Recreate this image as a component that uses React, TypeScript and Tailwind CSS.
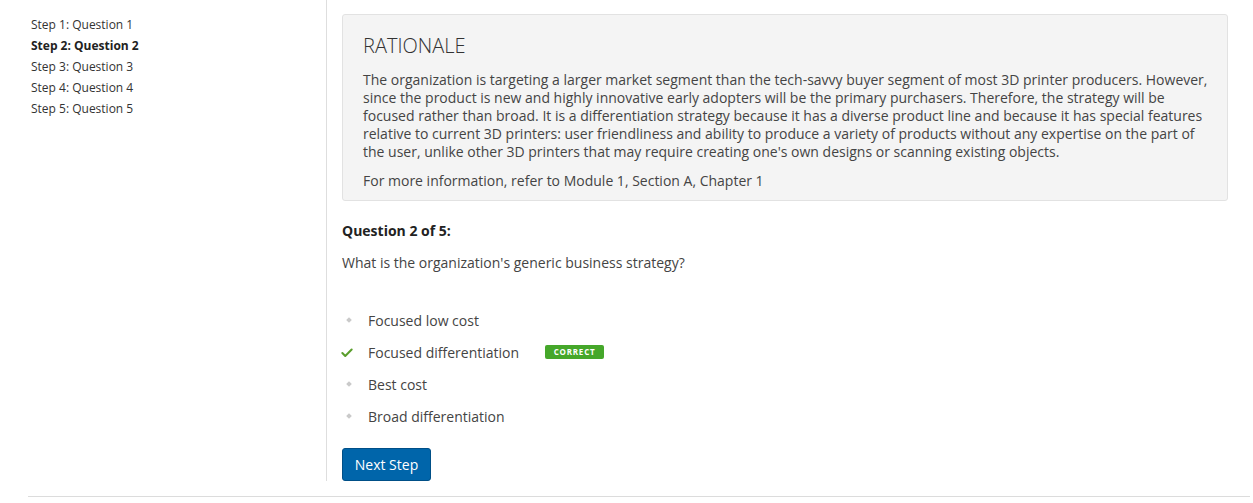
import { Check } from "lucide-react";

const steps = [
  "Step 1: Question 1",
  "Step 2: Question 2",
  "Step 3: Question 3",
  "Step 4: Question 4",
  "Step 5: Question 5",
];

const options = [
  { label: "Focused low cost", correct: false },
  { label: "Focused differentiation", correct: true },
  { label: "Best cost", correct: false },
  { label: "Broad differentiation", correct: false },
];

export default function App() {
  return (
    <div
      className="bg-white text-[#333] pl-[28px] pr-[3px]"
      style={{ fontFamily: '"Open Sans", "Liberation Sans", sans-serif' }}
    >
      <div className="flex pb-[15px] border-b border-[#dcdcdc]">
        {/* SIDEBAR */}
        <div className="w-[298px] shrink-0 pl-[3px] pt-[14px]">
          {steps.map((s, i) => (
            <div
              key={s}
              className={`text-[12px] leading-[21px] ${
                i === 1 ? "font-bold text-[#222]" : "text-[#333]"
              }`}
            >
              {s}
            </div>
          ))}
        </div>

        {/* MAIN */}
        <div className="flex-1 border-l border-[#dedede] pl-[15px] pr-[22px] pt-[14px]">
          <div className="bg-[#f4f4f4] border border-[#e2e2e2] rounded-[3px] pl-5 pr-[12px] pt-[17px] pb-[10px]">
            <h2 className="text-[20px] leading-[28px] font-light text-[#333]">
              RATIONALE
            </h2>
            <p className="mt-[11px] text-[14px] leading-[18px] text-[#444]">
              The organization is targeting a larger market segment than the
              tech-savvy buyer segment of most 3D printer producers. However,
              since the product is new and highly innovative early adopters will
              be the primary purchasers. Therefore, the strategy will be focused
              rather than broad. It is a differentiation strategy because it has
              a diverse product line and because it has special features
              relative to current 3D printers: user friendliness and ability to
              produce a variety of products without any expertise on the part of
              the user, unlike other 3D printers that may require creating one's
              own designs or scanning existing objects.
            </p>
            <p className="mt-[11px] text-[14px] leading-[18px] text-[#444]">
              For more information, refer to Module 1, Section A, Chapter 1
            </p>
          </div>

          <div className="mt-[20px] text-[14px] leading-[20px] font-bold text-[#222]">
            Question 2 of 5:
          </div>
          <div className="mt-[12px] text-[14px] leading-[20px] text-[#444]">
            What is the organization's generic business strategy?
          </div>

          <div className="mt-[31px]">
            {options.map((o) => (
              <div key={o.label} className="flex items-center h-[32px]">
                <div className="w-[26px] flex items-center">
                  {o.correct ? (
                    <Check
                      className="w-[14px] h-[14px] -ml-[2px] mt-[2px] text-[#5a9e2c]"
                      strokeWidth={3.5}
                    />
                  ) : (
                    <span className="block ml-[5px] w-[4px] h-[4px] bg-[#cacaca] rotate-45" />
                  )}
                </div>
                <span className="text-[14px] text-[#444]">{o.label}</span>
                {o.correct && (
                  <span className="ml-[26px] bg-[#45a72a] text-white text-[8px] font-bold tracking-[0.8px] rounded-[2px] w-[59px] h-[14px] flex items-center justify-center">
                    CORRECT
                  </span>
                )}
              </div>
            ))}
          </div>

          <button className="mt-[16px] h-[33px] w-[89px] rounded-[3px] bg-[#0065aa] border border-[#004f87] text-white text-[14px]">
            Next Step
          </button>
        </div>
      </div>
    </div>
  );
}
